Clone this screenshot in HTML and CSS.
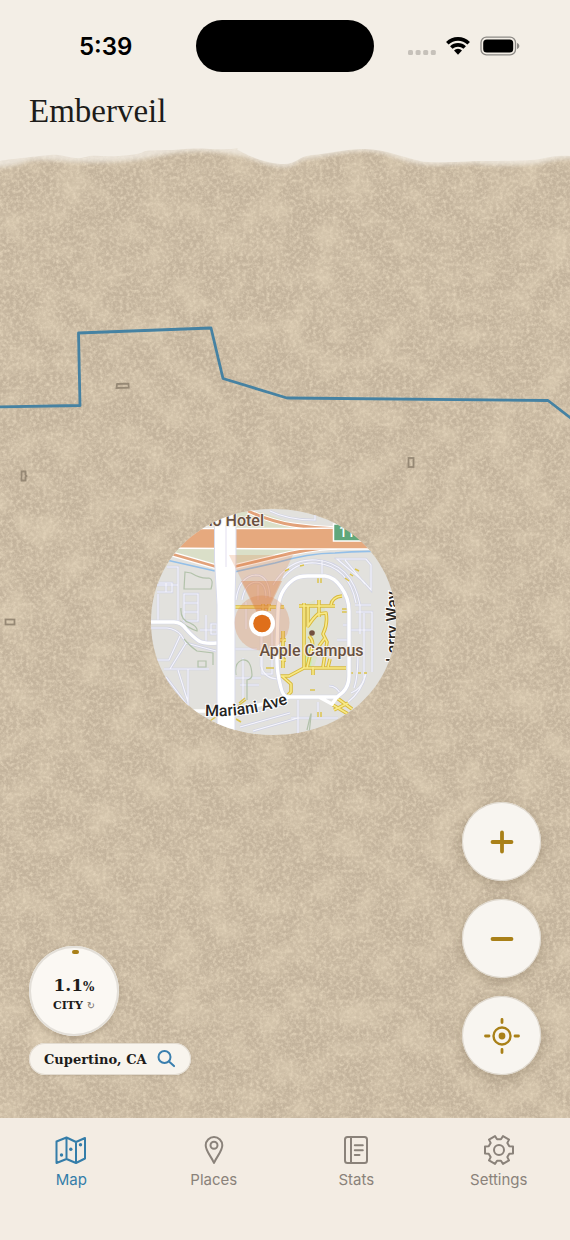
FILE: index.html
```html
<!DOCTYPE html>
<html lang="en">
<head>
<meta charset="utf-8">
<meta name="viewport" content="width=device-width, initial-scale=1">
<title>Emberveil</title>
<link rel="stylesheet" href="styles.css">
</head>
<body>
<div class="app">
  <header class="header">
    <div class="status">
      <time class="clock">5:39</time>
      <div class="island"></div>
      <div class="indicators">
        <svg class="dots" viewBox="0 0 28 18" aria-hidden="true"><g fill="#c6c1ba"><rect x="0" y="13" width="5" height="5" rx="1.500"/><rect x="7.600" y="13" width="5" height="5" rx="1.500"/><rect x="15.200" y="13" width="5" height="5" rx="1.500"/><rect x="22.800" y="13" width="5" height="5" rx="1.500"/></g></svg>
        <svg class="wifi" viewBox="0 0 24 18" aria-hidden="true"><g fill="none" stroke="#000" stroke-width="3.600"><path d="M1.300 6.200a15.400 15.400 0 0 1 21.400 0"/><path d="M5.300 10.500a9.800 9.800 0 0 1 13.400 0"/></g><path d="M8 13.400a5.800 5.800 0 0 1 8 0l-4 4.300z"/></svg>
        <svg class="battery" viewBox="0 0 40 20" aria-hidden="true"><rect x="1" y="1.200" width="34.500" height="17.600" rx="5.400" fill="none" stroke="#8c8985" stroke-width="1.300"/><rect x="3.200" y="3.400" width="30" height="13.200" rx="3.600"/><path d="M37 7v6c1.600-.500 2.300-1.600 2.300-3s-.700-2.500-2.300-3z" fill="#8c8985"/></svg>
      </div>
    </div>
    <h1 class="title">Emberveil</h1>
  </header>

  <main class="map">
    <svg class="canvas" viewBox="0 140 570 978" preserveAspectRatio="xMidYMin slice" role="img" aria-label="Explored map around Apple Campus">
      <defs>
        <filter id="grain" x="0" y="0" width="100%" height="100%" color-interpolation-filters="sRGB">
          <feTurbulence type="fractalNoise" baseFrequency="0.3" numOctaves="3" seed="8" result="fine"/>
          <feColorMatrix in="fine" type="matrix" values="0 0 0 0 .90  0 0 0 0 .84  0 0 0 0 .74  1.700 0 0 0 -.650" result="specks"/>
          <feTurbulence type="fractalNoise" baseFrequency="0.035" numOctaves="5" seed="21" result="broad"/>
          <feColorMatrix in="broad" type="matrix" values="0 0 0 0 .86  0 0 0 0 .80  0 0 0 0 .70  1.700 0 0 0 -.700" result="patches"/>
          <feMerge><feMergeNode in="SourceGraphic"/><feMergeNode in="patches"/><feMergeNode in="specks"/></feMerge>
        </filter>
        <filter id="soft" x="-5%" y="-20%" width="110%" height="140%"><feGaussianBlur stdDeviation="2"/></filter>
        <clipPath id="reveal"><path d="M273 509C344 509 396 558 396 622S344 735 273 735 151 686 151 622 203 509 273 509z"/></clipPath>
      </defs>

      <rect x="0" y="140" width="570" height="978" fill="#c3b39c" filter="url(#grain)"/>

      <path d="M-10 130H580V159C565 157 550 161 540 163S495 166 480 164 440 167 420 164 385 151 365 151 330 156 312 158 297 167 284 167 255 160 246 157 205 150 185 152 150 158 135 160 90 163 75 162 35 158 25 162 5 167-10 168z" fill="#f3eee6" opacity=".75" filter="url(#soft)"/>
      <path d="M0 140H570V156C558 155 550 157 540 159S495 161 480 161 435 164 420 161 385 149 365 149 325 154 312 155 296 164 284 164 255 159 246 154 236 150 238 148C225 151 200 147 185 149S148 149 143 152 115 157 100 156 85 159 75 158 60 154 50 155 10 159 0 161z" fill="#f3eee6"/>

      <path d="M-2 407L80 405.500 78.500 333 211 328 223 378.500 287 398 548 400.500 572 419" fill="none" stroke="#4682a2" stroke-width="2.800" stroke-linejoin="round"/>
      <g fill="none" stroke="#978975" stroke-width="1.800">
        <path d="M117 384l11.500-.400.200 4-12.200.400z"/><rect x="408.500" y="458" width="5" height="9"/><path d="M21.500 471.500h4v3.500l1 1-1 1v3.500h-4z"/><rect x="5.500" y="619.500" width="9" height="5"/>
      </g>

      <g clip-path="url(#reveal)">
        <rect x="145" y="500" width="260" height="245" fill="#e2e1dd"/>
        <path d="M235 512h25l35 12 45 5H235zM170 548h46v17l-44-12zM234 548h95l-55 8-40 11z" fill="#dadfc8"/>
        <g fill="none" stroke="#fff" stroke-width="5"><path d="M248 511q24 11 45 14t45 4M172 554l45 13M233 567l42-10q30-8 62-10"/></g>
        <g fill="none" stroke="#e2a27a" stroke-width="2.800"><path d="M248 511q24 11 45 14t45 4M172 554l45 13M233 567l42-10q30-8 62-10"/></g>
        <path d="M145 528.500H300L410 527V549H300L145 548z" fill="#e6a97e" stroke="#fff" stroke-width="1.500"/>
        <path d="M162 559l53 12M234 572l41-9q34-10 60-10 20-2 42-1.500" fill="none" stroke="#93bfe8" stroke-width="1.600"/>

        <g fill="none" stroke="#cfd1e4" stroke-width="2.400">
          <g id="lanes">
            <path d="M270 511q18 9 45 9v-8M167 567h11v18h-21M178 585v36M159 583h13v9h-15M166 583v9M184 594h14v27h-14zM184 603h14M184 612h14M158 594v26M151 628h16q9 1 14 7l5 8-16 26M151 660h18l11-24M164 669h45M186 643l30 8M206 615v26M200 630h17M211 624h6v10h-6zM188 669v42M166 677l22 29M178 670l10 32"/>
            <path d="M236 600q3-24 20-25 13 0 14 23M242 600q3-17 14-18 10 0 10 16M246 602v27M258 585v15M235 649h22M235 678h26M243 658v42M261 632v34q3 12 16 13M240 685h19"/>
            <path d="M273 585q16-27 43-25 36 3 44 45v29M283 578q14-17 33-15 33 3 40 40M322 560v14M337 559h29l5 6v25l-8-9zM345 560l20 24M355 605h16M356 612h16v60M364 613v62M349 630h22M337 640h12M343 625h6M350 653h14v26q-3 10-13 14M358 650q0 28-4 38M366 674q-4 17-18 28M329 686q8 0 12 9M262 674v-44h10v44z"/>
            <path d="M236 716l50-12M240 727l50-14M253 731l45-13M298 700v34M291 718h47M318 702v14"/>
          </g>
        </g>
        <use href="#lanes" fill="none" stroke="#f5f5fb" stroke-width="1.200"/>

        <g fill="none" stroke="#b3c2ab" stroke-width="1.200"><path d="M185 572l6 1q10 6 18 5 5 1 2 11h-27zM181 608q-1 12 9 15 8 4 7 8-9-3-17-10M184 639q7 8 13 12l16 2v12M198 661h8v6h-8zM236 675q-2-12 6-15 9-2 10 15 0 4-5 5v20M307 730q5-22 4-14l-2 18"/></g>

        <path d="M303 605l12-5v12l-4 7 4 9-2 17h-9zM314 610l10-4 3 9-3 22-10 30h-5z" fill="#dce2cb"/>
        <path d="M304 648h9l-2 19h-7z" fill="#c9efad"/>
        <g fill="none" stroke="#d8b93c" stroke-width="3.600" stroke-linejoin="round">
          <path id="walks" d="M299 606h36M304 603v65M308 606v20q6-9 10-12l8-1q2 11-3 21l4 8-4 25M319 600v17M331 605q1-8 11-9M309 636q5 5 3 11l-5 21M325 638l-6 8M303 668h43M304 668l-15 8h-7l9 8v8l-4 4M280 676h10M313 667v8M328 667l2-8M283 631v37M280 640h6M281 650h5M281 660h5M235 607h49M263 604v7M269 604v7M337 698l15 11M333 705l15 9M334 710l14-7"/>
        </g>
        <use href="#walks" fill="none" stroke="#f8ea88" stroke-width="1.600"/>
        <g fill="none" stroke="#dcc34c" stroke-width="1.500"><path d="M318 578v5M321 578v5M285 571l4-2M300 566l4-1M355 569l4 2M350 574l3 2M345 578l4 3M342 609h6M342 612h6M266 668h8M350 673h3M358 673h3M364 673h3M310 690h5M318 712v5M321 712v5M238 706l8-6M239 703l6-5M210 721l7-5M236 719l5 3"/></g>

        <path d="M278 612q0-21 15-32 5-4 15-4h17q9 1 16 11 8 11 8 24v65q0 10-6 16l-6 5h-48q-6 0-8-9-4-15-4-27 0-20 1-49" fill="none" stroke="#d3d5e6" stroke-width="4.600"/>
        <path d="M278 612q0-21 15-32 5-4 15-4h17q9 1 16 11 8 11 8 24v65q0 10-6 16l-6 5h-48q-6 0-8-9-4-15-4-27 0-20 1-49M337 697l-5 7-13-7M289 697q-25 7-55 14M180 711h40" fill="none" stroke="#fff" stroke-width="3.400"/>
        <path d="M145 622h29q7 0 12 7 7 8 13 12 5 3 18 2" fill="none" stroke="#d3d5e6" stroke-width="4.600"/>
        <path d="M145 622h29q7 0 12 7 7 8 13 12 5 3 18 2" fill="none" stroke="#fff" stroke-width="3.400"/>
        <path d="M214.500 505H236v55l-1 40v140h-18V605l-2.500-45z" fill="#fff" stroke="#d9dbea" stroke-width="1"/>
        <path d="M226 525v42" stroke="#eceaf4" stroke-width="1.500"/>

        <path d="M229 555h64l-31 66z" fill="#df7c3d" opacity=".22"/>
        <path d="M241 581h41l-20 42z" fill="#df7c3d" opacity=".36"/>
        <circle cx="262" cy="623" r="27.500" fill="#dc7a3c" opacity=".26"/>
        <circle cx="262" cy="623.500" r="13" fill="#fff"/>
        <circle cx="262" cy="623.500" r="8.800" fill="#df6f1a"/>

        <rect x="333.500" y="524" width="28" height="17" fill="#60a77b" stroke="#fff" stroke-width="1.500"/>
        <text class="shield-label" x="339" y="537">11</text>
        <text class="place-label" x="264" y="526" text-anchor="end">Cupertino Hotel</text>
        <circle cx="312" cy="633" r="2.800" fill="#72513e"/>
        <text class="place-label" x="311.500" y="656" text-anchor="middle">Apple Campus</text>
        <path id="mariani" d="M205 716Q250 718 292 702" fill="none"/>
        <text class="road-label"><textPath href="#mariani">Mariani Ave</textPath></text>
        <text class="road-label" transform="translate(398 662) rotate(-90)">Larry Way</text>
      </g>
    </svg>

    <div class="overlay">
      <div class="progress">
        <button class="percent" type="button">
          <svg class="arc" viewBox="0 0 90 90" aria-hidden="true"><path d="M45 6h3" stroke="#a98018" stroke-width="4" stroke-linecap="round"/></svg>
          <span class="value">1.1<small class="unit">%</small></span>
          <span class="scope">CITY <span class="cycle">↻</span></span>
        </button>
        <button class="place" type="button">Cupertino, CA
          <svg class="search" viewBox="0 0 18 18" fill="none" stroke="#3a7fae" stroke-width="2" stroke-linecap="round" aria-hidden="true"><circle cx="7.500" cy="7" r="6"/><path d="M12 11.500l5 4.600"/></svg>
        </button>
      </div>
      <div class="controls">
        <button class="round" type="button" aria-label="Zoom in"><svg class="control-icon" viewBox="0 0 38 38" aria-hidden="true"><path d="M9.500 19h19M19 9.500v19" stroke-width="3.800"/></svg></button>
        <button class="round" type="button" aria-label="Zoom out"><svg class="control-icon" viewBox="0 0 38 38" aria-hidden="true"><path d="M9.500 19h19" stroke-width="3.800"/></svg></button>
        <button class="round" type="button" aria-label="Center on my location"><svg class="control-icon" viewBox="0 0 38 38" aria-hidden="true"><circle cx="19" cy="19" r="8.500" stroke-width="2.400"/><circle cx="19" cy="19" r="3.400" fill="#a98018" stroke="none"/><path d="M19 2.500v3M19 32.500v3M2.500 19h3.500M32 19h3.500" stroke-width="2.800"/></svg></button>
      </div>
    </div>
  </main>

  <nav class="tabs" aria-label="Main">
    <a class="tab active" href="#map" aria-current="page">
      <svg class="tab-icon" viewBox="0 0 32 32" aria-hidden="true"><path d="M1.500 7.500l10-4 9.500 4.500 9-4v20.500L21 29l-9.500-4-10 4zM11.500 3.500V25M21 8v21"/><g fill="currentColor" stroke="none"><circle cx="6.500" cy="21" r="1.700"/><circle cx="15.800" cy="15.200" r="1.700"/><circle cx="25.500" cy="10.800" r="1.700"/></g></svg>
      Map
    </a>
    <a class="tab" href="#places">
      <svg class="tab-icon" viewBox="0 0 32 32" aria-hidden="true"><path d="M16 29C13.500 22.500 7.700 17.500 7.700 11.300a8.300 8.300 0 0 1 16.600 0C24.300 17.500 18.500 22.500 16 29z"/><circle cx="16" cy="11.300" r="3.500"/></svg>
      Places
    </a>
    <a class="tab" href="#stats">
      <svg class="tab-icon" viewBox="0 0 32 32" aria-hidden="true"><rect x="5" y="3" width="22" height="26" rx="2.500"/><path d="M11 3v26M14.800 11.300h8M14.800 16.200h8M14.800 21h4.700"/></svg>
      Stats
    </a>
    <a class="tab" href="#settings">
      <svg class="tab-icon" viewBox="-16 -16 32 32" aria-hidden="true"><path d="M10.300-3.700L14-3.500V3.500L10.300 3.700 8.350 7.070 10 10.400 4 13.900 1.950 10.800H-1.950L-4 13.900-10 10.400-8.350 7.070-10.300 3.700-14 3.500V-3.500L-10.300-3.700-8.350-7.070-10-10.400-4-13.900-1.950-10.800H1.950L4-13.900 10-10.400 8.350-7.070z"/><circle r="5"/></svg>
      Settings
    </a>
  </nav>
</div>
</body>
</html>
```

FILE: styles.css
```css
* {
  box-sizing: border-box;
}

body {
  margin: 0;
  background: #f3eee6;
  color: #1d1c1a;
  font-family: Inter, "Liberation Sans", sans-serif;
}

button {
  border: 0;
  padding: 0;
  font: inherit;
  color: inherit;
  cursor: pointer;
}

svg {
  display: block;
}

.app {
  display: flex;
  flex-direction: column;
  min-height: 100vh;
}

.header {
  padding: 20px 29px 9px;
}

.status {
  display: grid;
  grid-template-columns: 1fr 178px 1fr;
  align-items: center;
}

.clock {
  padding: 2px 0 0 50px;
  color: #000;
  font-size: 24px;
  font-weight: 600;
  line-height: 28px;
}

.island {
  height: 52px;
  border-radius: 26px;
  background: #000;
}

.indicators {
  display: flex;
  align-items: center;
  justify-content: flex-end;
  gap: 10px;
  padding-right: 21px;
}

.dots {
  width: 28px;
  height: 18px;
}

.wifi {
  width: 24px;
  height: 18px;
}

.battery {
  width: 40px;
  height: 20px;
}

.title {
  margin: 20px 0 0;
  font-family: Georgia, "Liberation Serif", serif;
  font-size: 33px;
  font-weight: 400;
  line-height: 39px;
}

.map {
  display: grid;
  flex: 1;
  min-height: 600px;
  overflow: hidden;
}

.canvas,
.overlay {
  grid-area: 1 / 1;
}

.canvas {
  width: 100%;
  height: 100%;
  min-height: 0;
}

.place-label,
.road-label {
  font-family: Roboto, sans-serif;
  font-size: 16px;
  font-weight: 500;
  fill: #262422;
  stroke: #fff;
  stroke-width: 2px;
  paint-order: stroke;
}

.place-label {
  fill: #69503f;
  stroke: #f4efe9;
}

.shield-label {
  font-family: Roboto, sans-serif;
  font-size: 14px;
  font-weight: 500;
  fill: #fff;
}

.overlay {
  position: relative;
  display: flex;
  align-items: flex-end;
  justify-content: space-between;
  padding: 0 29px 43px;
}

.progress {
  display: flex;
  flex-direction: column;
  align-items: flex-start;
  gap: 7px;
  font-family: Georgia, "DejaVu Serif", serif;
  font-weight: 700;
}

.percent {
  position: relative;
  display: flex;
  flex-direction: column;
  align-items: center;
  justify-content: center;
  width: 90px;
  height: 90px;
  padding-top: 8px;
  border-radius: 50%;
  background: #fbf8f3;
  box-shadow: inset 0 0 0 2px #e3dfd8, 0 3px 6px rgba(80, 62, 38, 0.18);
}

.arc {
  position: absolute;
  inset: 0;
}

.value {
  font-size: 17px;
  line-height: 20px;
}

.unit {
  font-size: 12px;
}

.scope {
  font-size: 11px;
  line-height: 18px;
}

.cycle {
  color: #77716a;
  font-family: "DejaVu Sans", sans-serif;
  font-size: 10px;
  font-weight: 400;
}

.place {
  display: flex;
  align-items: center;
  gap: 10px;
  height: 32px;
  padding: 0 16px 0 15px;
  border-radius: 16px;
  background: #f8f4ed;
  box-shadow: inset 0 0 0 1px #e2dbd0, 0 1px 2px rgba(80, 62, 38, 0.12);
  font-size: 13px;
}

.search {
  width: 18px;
  height: 18px;
}

.controls {
  display: flex;
  flex-direction: column;
  gap: 18px;
}

.round {
  display: grid;
  place-items: center;
  width: 79px;
  height: 79px;
  border-radius: 50%;
  background: #f8f5f0;
  box-shadow: inset 0 0 0 1px #ddd6cb, 0 3px 12px rgba(80, 62, 38, 0.25);
}

.control-icon {
  width: 38px;
  height: 38px;
  fill: none;
  stroke: #a98018;
  stroke-linecap: round;
}

.tabs {
  display: grid;
  grid-template-columns: repeat(4, 1fr);
  padding: 16px 0 50px;
  background: #f3ece3;
}

.tab {
  display: flex;
  flex-direction: column;
  align-items: center;
  gap: 4px;
  color: #8a827a;
  font-size: 15px;
  line-height: 20px;
  text-decoration: none;
}

.active {
  color: #347da9;
}

.tab-icon {
  width: 32px;
  height: 32px;
  fill: none;
  stroke: currentColor;
  stroke-width: 2;
  stroke-linecap: round;
  stroke-linejoin: round;
}
```
